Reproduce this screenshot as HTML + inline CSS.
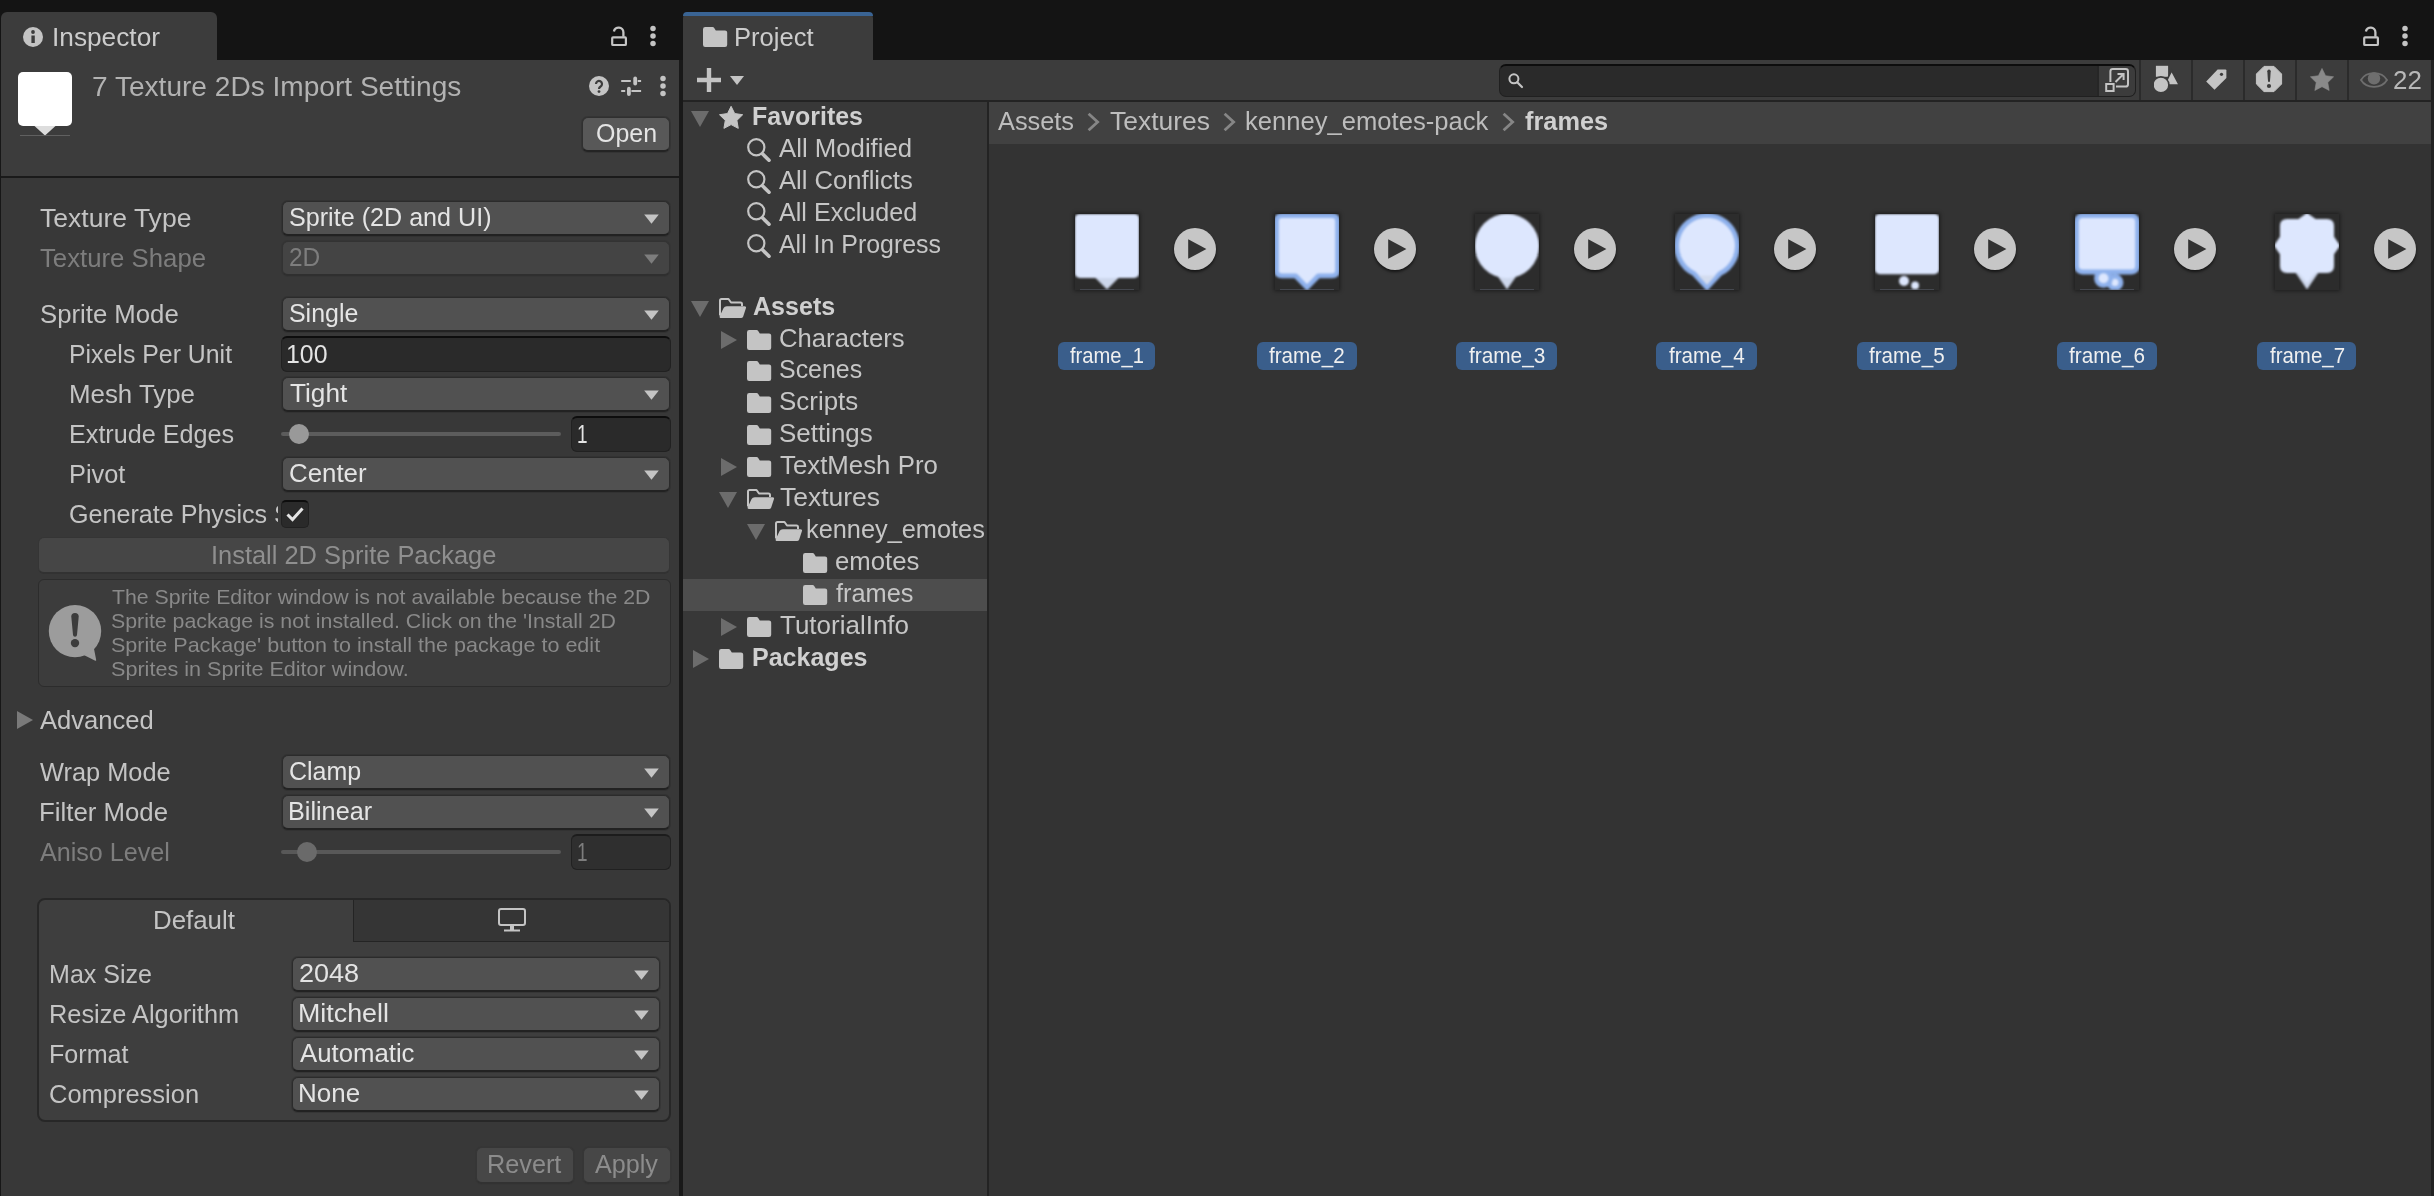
<!DOCTYPE html>
<html lang="en"><head><meta charset="utf-8"><title>Unity - Inspector / Project</title>
<style>
html,body{margin:0;padding:0;background:#141414}
body{width:2434px;height:1196px;position:relative;overflow:hidden;font-family:"Liberation Sans", sans-serif}
body div,body svg,body span{position:absolute;box-sizing:border-box}
.t{white-space:pre;line-height:30px;transform-origin:0 50%}
</style></head>
<body>
<div style="left:0px;top:0px;width:2434px;height:1196px;background:#141414;"></div>
<div style="left:1px;top:12px;width:216px;height:50px;background:#3c3c3c;border-radius:6px 6px 0 0;"></div>
<div style="left:0px;top:60px;width:679px;height:118px;background:#3c3c3c;"></div>
<div style="left:0px;top:176px;width:679px;height:2px;background:#1a1a1a;"></div>
<div style="left:0px;top:178px;width:679px;height:1018px;background:#383838;"></div>
<div style="left:0px;top:60px;width:1px;height:1136px;background:#171717;"></div>
<div style="left:679px;top:60px;width:4px;height:1136px;background:#191919;"></div>
<div style="left:683px;top:12px;width:190px;height:50px;background:#3c3c3c;border-radius:6px 6px 0 0;"></div>
<div style="left:683px;top:12px;width:190px;height:4px;background:#3a6494;border-radius:6px 6px 0 0;"></div>
<div style="left:683px;top:60px;width:1751px;height:41px;background:#3c3c3c;"></div>
<div style="left:683px;top:100px;width:1751px;height:2px;background:#232323;"></div>
<div style="left:683px;top:102px;width:304px;height:1094px;background:#383838;"></div>
<div style="left:987px;top:102px;width:2px;height:1094px;background:#232323;"></div>
<div style="left:989px;top:102px;width:1445px;height:42px;background:#414141;"></div>
<div style="left:989px;top:144px;width:1445px;height:1052px;background:#333333;"></div>
<div style="left:2431px;top:60px;width:3px;height:1136px;background:#222222;"></div>
<svg style="left:23px;top:27px;" width="20" height="20" viewBox="0 0 20 20"><circle cx="10" cy="10" r="10" fill="#c4c4c4"/><circle cx="10" cy="5" r="1.9" fill="#3c3c3c"/><rect x="8.4" y="8.5" width="3.4" height="7.5" fill="#3c3c3c"/></svg>
<span class="t" style="left:52.15px;top:22px;font-size:25.3px;color:#cccccc;transform:scaleX(1.0376);">Inspector</span>
<svg style="left:610px;top:26px;" width="18" height="21" viewBox="0 0 18 21"><path d="M3.9 5.4 A4.8 4.8 0 0 1 13.4 6.2 V10.8" fill="none" stroke="#c4c4c4" stroke-width="2.3"/><rect x="2.2" y="11.4" width="13.7" height="7.6" rx="0.8" fill="none" stroke="#c4c4c4" stroke-width="2.2"/></svg>
<svg style="left:649px;top:25px;" width="8" height="22" viewBox="0 0 8 22"><circle cx="4" cy="3.5" r="2.75" fill="#c4c4c4"/><circle cx="4" cy="11.0" r="2.75" fill="#c4c4c4"/><circle cx="4" cy="18.5" r="2.75" fill="#c4c4c4"/></svg>
<svg style="left:18px;top:72px;" width="54" height="64" viewBox="0 0 54 64"><rect x="0" y="0" width="54" height="54" rx="5" fill="#ffffff"/><path d="M16.5 54 H37.5 L27 63.5 Z" fill="#dddddd"/><rect x="2" y="63" width="50" height="0.8" fill="#6a6a6a"/></svg>
<span class="t" style="left:92.18px;top:72px;font-size:27.3px;color:#b2b2b2;transform:scaleX(1.0286);">7 Texture 2Ds Import Settings</span>
<svg style="left:589px;top:76px;" width="20" height="20" viewBox="0 0 20 20"><circle cx="10" cy="10" r="10" fill="#c4c4c4"/><path d="M7 8 a3 3 0 1 1 4.6 2.5 c-1.1 0.7 -1.6 1.2 -1.6 2.4" fill="none" stroke="#3c3c3c" stroke-width="2.2"/><circle cx="10" cy="15.6" r="1.4" fill="#3c3c3c"/></svg>
<svg style="left:620px;top:76px;" width="22" height="21" viewBox="0 0 22 21"><g stroke="#c4c4c4" stroke-width="2" fill="none"><path d="M1.2 5 H10.8"/><path d="M17.7 5 H21.1"/><path d="M1.2 15 H5.2"/><path d="M11.4 15 H21.1"/></g><rect x="13.3" y="0.5" width="3.8" height="9" rx="1.9" fill="#c4c4c4"/><rect x="7" y="10.8" width="3.8" height="9.2" rx="1.9" fill="#c4c4c4"/></svg>
<svg style="left:659px;top:75px;" width="8" height="22" viewBox="0 0 8 22"><circle cx="4" cy="3.5" r="2.75" fill="#c4c4c4"/><circle cx="4" cy="11.0" r="2.75" fill="#c4c4c4"/><circle cx="4" cy="18.5" r="2.75" fill="#c4c4c4"/></svg>
<div style="left:582px;top:117px;width:88px;height:35px;background:#585858;border:1px solid #303030;border-bottom:2px solid #242424;border-radius:6px;box-shadow:0 0 0 1px rgba(36,36,36,0.3);"></div>
<span class="t" style="left:595.53px;top:118px;font-size:25.3px;color:#e4e4e4;transform:scaleX(0.9868);">Open</span>
<span class="t" style="left:39.59px;top:203px;font-size:25.3px;color:#c4c4c4;transform:scaleX(1.0486);">Texture Type</span>
<div style="left:282px;top:201px;width:388px;height:35px;background:#515151;border:1px solid #2b2b2b;border-bottom:2px solid #222222;border-radius:6px;box-shadow:0 0 0 1px rgba(36,36,36,0.3);"></div>
<span class="t" style="left:289.21px;top:202px;font-size:25.3px;color:#e4e4e4;transform:scaleX(0.9936);">Sprite (2D and UI)</span>
<svg style="left:643.5px;top:214px;" width="15" height="10" viewBox="0 0 15 10"><path d="M0.2 0.4 L14.8 0.4 L7.5 9.7 Z" fill="#c4c4c4"/></svg>
<span class="t" style="left:39.6px;top:243px;font-size:25.3px;color:#7d7d7d;transform:scaleX(1.0177);">Texture Shape</span>
<div style="left:282px;top:241px;width:388px;height:35px;background:#444444;border:1px solid #333333;border-bottom:2px solid #2f2f2f;border-radius:6px;box-shadow:0 0 0 1px rgba(36,36,36,0.12);"></div>
<span class="t" style="left:288.85px;top:242px;font-size:25.3px;color:#7d7d7d;transform:scaleX(0.9677);">2D</span>
<svg style="left:643.5px;top:254px;" width="15" height="10" viewBox="0 0 15 10"><path d="M0.2 0.4 L14.8 0.4 L7.5 9.7 Z" fill="#7d7d7d"/></svg>
<span class="t" style="left:39.6px;top:299px;font-size:25.3px;color:#c4c4c4;transform:scaleX(1.0172);">Sprite Mode</span>
<div style="left:282px;top:297px;width:388px;height:35px;background:#515151;border:1px solid #2b2b2b;border-bottom:2px solid #222222;border-radius:6px;box-shadow:0 0 0 1px rgba(36,36,36,0.3);"></div>
<span class="t" style="left:289.22px;top:298px;font-size:25.3px;color:#e4e4e4;transform:scaleX(0.9852);">Single</span>
<svg style="left:643.5px;top:310px;" width="15" height="10" viewBox="0 0 15 10"><path d="M0.2 0.4 L14.8 0.4 L7.5 9.7 Z" fill="#c4c4c4"/></svg>
<span class="t" style="left:68.96px;top:339px;font-size:25.3px;color:#c4c4c4;transform:scaleX(0.9828);">Pixels Per Unit</span>
<div style="left:281px;top:336px;width:390px;height:36px;background:#2a2a2a;border:1px solid #212121;border-top:2px solid #0d0d0d;border-radius:6px;"></div>
<span class="t" style="left:286.15px;top:339px;font-size:25.3px;color:#e4e4e4;transform:scaleX(0.9825);">100</span>
<span class="t" style="left:68.88px;top:379px;font-size:25.3px;color:#c4c4c4;transform:scaleX(1.0220);">Mesh Type</span>
<div style="left:282px;top:377px;width:388px;height:35px;background:#515151;border:1px solid #2b2b2b;border-bottom:2px solid #222222;border-radius:6px;box-shadow:0 0 0 1px rgba(36,36,36,0.3);"></div>
<span class="t" style="left:289.59px;top:378px;font-size:25.3px;color:#e4e4e4;transform:scaleX(1.0364);">Tight</span>
<svg style="left:643.5px;top:390px;" width="15" height="10" viewBox="0 0 15 10"><path d="M0.2 0.4 L14.8 0.4 L7.5 9.7 Z" fill="#c4c4c4"/></svg>
<span class="t" style="left:68.93px;top:419px;font-size:25.3px;color:#c4c4c4;transform:scaleX(0.9952);">Extrude Edges</span>
<div style="left:281px;top:432px;width:280px;height:4px;background:#5c5c5c;border-radius:2px;"></div>
<div style="left:289px;top:424px;width:20px;height:20px;background:#999999;border-radius:50%;"></div>
<div style="left:571px;top:416px;width:100px;height:36px;background:#2a2a2a;border:1px solid #212121;border-top:2px solid #0d0d0d;border-radius:6px;"></div>
<span class="t" style="left:576.51px;top:419px;font-size:25.3px;color:#e4e4e4;transform:scaleX(0.7502);">1</span>
<span class="t" style="left:68.92px;top:459px;font-size:25.3px;color:#c4c4c4;transform:scaleX(1.0027);">Pivot</span>
<div style="left:282px;top:457px;width:388px;height:35px;background:#515151;border:1px solid #2b2b2b;border-bottom:2px solid #222222;border-radius:6px;box-shadow:0 0 0 1px rgba(36,36,36,0.3);"></div>
<span class="t" style="left:288.79px;top:458px;font-size:25.3px;color:#e4e4e4;transform:scaleX(1.0211);">Center</span>
<svg style="left:643.5px;top:470px;" width="15" height="10" viewBox="0 0 15 10"><path d="M0.2 0.4 L14.8 0.4 L7.5 9.7 Z" fill="#c4c4c4"/></svg>
<div style="left:69.32px;top:499px;width:208.3px;height:30px;overflow:hidden"><span class="t" style="left:0;top:0;font-size:25.3px;color:#c4c4c4;transform:scaleX(0.9924);">Generate Physics Shape</span></div>
<div style="left:281px;top:500px;width:28px;height:28px;background:#2a2a2a;border:1px solid #212121;border-top:2px solid #0d0d0d;border-radius:5px;"></div>
<svg style="left:285px;top:505px;" width="20" height="18" viewBox="0 0 20 18"><path d="M2.5 9.5 L7.5 14.5 L17.5 3.5" fill="none" stroke="#e4e4e4" stroke-width="3"/></svg>
<div style="left:38px;top:537px;width:632px;height:37px;background:#464646;border:1px solid #353535;border-bottom:2px solid #323232;border-radius:6px;"></div>
<span class="t" style="left:211.01px;top:540px;font-size:25.3px;color:#8f8f8f;transform:scaleX(1.0044);">Install 2D Sprite Package</span>
<div style="left:38px;top:579px;width:633px;height:108px;background:#3c3c3c;border:1px solid #2c2c2c;border-radius:6px;"></div>
<svg style="left:48px;top:604px;" width="56" height="60" viewBox="0 0 56 60"><circle cx="27" cy="27.1" r="26.2" fill="#9c9c9c"/><path d="M36.3 51.2 L46.8 56.6 Q48.6 57.5 48.1 55.4 L45.8 43.7 Z" fill="#9c9c9c"/><path d="M23.3 12.5 Q23.3 9 27 9 Q30.7 9 30.7 12.5 L29 31 Q28.8 32.8 27 32.8 Q25.2 32.8 25 31 Z" fill="#3c3c3c"/><circle cx="27" cy="39.1" r="4.2" fill="#3c3c3c"/></svg>
<span class="t" style="left:111.57px;top:582px;font-size:21px;color:#898989;transform:scaleX(1.0138);">The Sprite Editor window is not available because the 2D</span>
<span class="t" style="left:111.23px;top:606px;font-size:21px;color:#898989;transform:scaleX(1.0143);">Sprite package is not installed. Click on the &#x27;Install 2D</span>
<span class="t" style="left:111.23px;top:630px;font-size:21px;color:#898989;transform:scaleX(1.0258);">Sprite Package&#x27; button to install the package to edit</span>
<span class="t" style="left:111.23px;top:654px;font-size:21px;color:#898989;transform:scaleX(1.0282);">Sprites in Sprite Editor window.</span>
<svg style="left:17px;top:711px;" width="16" height="18" viewBox="0 0 16 18"><path d="M0 0 L16 9 L0 18 Z" fill="#7a7a7a"/></svg>
<span class="t" style="left:40px;top:705px;font-size:25.3px;color:#c4c4c4;transform:scaleX(1.0116);">Advanced</span>
<span class="t" style="left:40px;top:757px;font-size:25.3px;color:#c4c4c4;transform:scaleX(1.0033);">Wrap Mode</span>
<div style="left:282px;top:755px;width:388px;height:35px;background:#515151;border:1px solid #2b2b2b;border-bottom:2px solid #222222;border-radius:6px;box-shadow:0 0 0 1px rgba(36,36,36,0.3);"></div>
<span class="t" style="left:288.83px;top:756px;font-size:25.3px;color:#e4e4e4;transform:scaleX(0.9874);">Clamp</span>
<svg style="left:643.5px;top:768px;" width="15" height="10" viewBox="0 0 15 10"><path d="M0.2 0.4 L14.8 0.4 L7.5 9.7 Z" fill="#c4c4c4"/></svg>
<span class="t" style="left:38.78px;top:797px;font-size:25.3px;color:#c4c4c4;transform:scaleX(1.0200);">Filter Mode</span>
<div style="left:282px;top:795px;width:388px;height:35px;background:#515151;border:1px solid #2b2b2b;border-bottom:2px solid #222222;border-radius:6px;box-shadow:0 0 0 1px rgba(36,36,36,0.3);"></div>
<span class="t" style="left:288.03px;top:796px;font-size:25.3px;color:#e4e4e4;transform:scaleX(0.9967);">Bilinear</span>
<svg style="left:643.5px;top:808px;" width="15" height="10" viewBox="0 0 15 10"><path d="M0.2 0.4 L14.8 0.4 L7.5 9.7 Z" fill="#c4c4c4"/></svg>
<span class="t" style="left:40px;top:837px;font-size:25.3px;color:#7d7d7d;transform:scaleX(0.9928);">Aniso Level</span>
<div style="left:281px;top:850px;width:280px;height:4px;background:#585858;border-radius:2px;"></div>
<div style="left:297px;top:842px;width:20px;height:20px;background:#6a6a6a;border-radius:50%;"></div>
<div style="left:571px;top:834px;width:100px;height:36px;background:#2f2f2f;border:1px solid #212121;border-top:2px solid #1c1c1c;border-radius:6px;"></div>
<span class="t" style="left:576.51px;top:837px;font-size:25.3px;color:#7d7d7d;transform:scaleX(0.7502);">1</span>
<div style="left:37px;top:898px;width:634px;height:224px;background:#3e3e3e;border:2px solid #272727;border-radius:8px;"></div>
<div style="left:353px;top:900px;width:316px;height:42px;background:#353535;border-left:1px solid #242424;border-bottom:1px solid #242424;border-radius:0 6px 0 0;"></div>
<span class="t" style="left:153.28px;top:905px;font-size:25.3px;color:#c4c4c4;transform:scaleX(1.0221);">Default</span>
<svg style="left:498px;top:908px;" width="28" height="24" viewBox="0 0 28 24"><rect x="1" y="1" width="26" height="16" rx="2" fill="none" stroke="#c4c4c4" stroke-width="2"/><rect x="12" y="17" width="4" height="5" fill="#c4c4c4"/><rect x="6" y="21.5" width="16" height="2" fill="#c4c4c4"/></svg>
<span class="t" style="left:48.94px;top:959px;font-size:25.3px;color:#c4c4c4;transform:scaleX(0.9907);">Max Size</span>
<div style="left:292px;top:957px;width:368px;height:35px;background:#515151;border:1px solid #2b2b2b;border-bottom:2px solid #222222;border-radius:6px;box-shadow:0 0 0 1px rgba(36,36,36,0.3);"></div>
<span class="t" style="left:298.73px;top:958px;font-size:25.3px;color:#e4e4e4;transform:scaleX(1.0690);">2048</span>
<svg style="left:633.5px;top:970px;" width="15" height="10" viewBox="0 0 15 10"><path d="M0.2 0.4 L14.8 0.4 L7.5 9.7 Z" fill="#c4c4c4"/></svg>
<span class="t" style="left:48.92px;top:999px;font-size:25.3px;color:#c4c4c4;transform:scaleX(1.0015);">Resize Algorithm</span>
<div style="left:292px;top:997px;width:368px;height:35px;background:#515151;border:1px solid #2b2b2b;border-bottom:2px solid #222222;border-radius:6px;box-shadow:0 0 0 1px rgba(36,36,36,0.3);"></div>
<span class="t" style="left:297.91px;top:998px;font-size:25.3px;color:#e4e4e4;transform:scaleX(1.0595);">Mitchell</span>
<svg style="left:633.5px;top:1010px;" width="15" height="10" viewBox="0 0 15 10"><path d="M0.2 0.4 L14.8 0.4 L7.5 9.7 Z" fill="#c4c4c4"/></svg>
<span class="t" style="left:48.94px;top:1039px;font-size:25.3px;color:#c4c4c4;transform:scaleX(0.9932);">Format</span>
<div style="left:292px;top:1037px;width:368px;height:35px;background:#515151;border:1px solid #2b2b2b;border-bottom:2px solid #222222;border-radius:6px;box-shadow:0 0 0 1px rgba(36,36,36,0.3);"></div>
<span class="t" style="left:300px;top:1038px;font-size:25.3px;color:#e4e4e4;transform:scaleX(1.0179);">Automatic</span>
<svg style="left:633.5px;top:1050px;" width="15" height="10" viewBox="0 0 15 10"><path d="M0.2 0.4 L14.8 0.4 L7.5 9.7 Z" fill="#c4c4c4"/></svg>
<span class="t" style="left:49.21px;top:1079px;font-size:25.3px;color:#c4c4c4;transform:scaleX(1.0072);">Compression</span>
<div style="left:292px;top:1077px;width:368px;height:35px;background:#515151;border:1px solid #2b2b2b;border-bottom:2px solid #222222;border-radius:6px;box-shadow:0 0 0 1px rgba(36,36,36,0.3);"></div>
<span class="t" style="left:297.97px;top:1078px;font-size:25.3px;color:#e4e4e4;transform:scaleX(1.0264);">None</span>
<svg style="left:633.5px;top:1090px;" width="15" height="10" viewBox="0 0 15 10"><path d="M0.2 0.4 L14.8 0.4 L7.5 9.7 Z" fill="#c4c4c4"/></svg>
<div style="left:476px;top:1147px;width:98px;height:37px;background:#474747;border:1px solid #363636;border-bottom:2px solid #323232;border-radius:6px;box-shadow:0 0 0 1px rgba(36,36,36,0.1);"></div>
<span class="t" style="left:486.83px;top:1149px;font-size:25.3px;color:#8c8c8c;transform:scaleX(0.9983);">Revert</span>
<div style="left:583px;top:1147px;width:88px;height:37px;background:#474747;border:1px solid #363636;border-bottom:2px solid #323232;border-radius:6px;box-shadow:0 0 0 1px rgba(36,36,36,0.1);"></div>
<span class="t" style="left:594.5px;top:1149px;font-size:25.3px;color:#8c8c8c;transform:scaleX(0.9939);">Apply</span>
<svg style="left:703px;top:27px;" width="25" height="21" viewBox="0 0 25 21"><path d="M2.2 0 H9.6 Q10.6 0 11.2 0.9 L12.8 3.4 H22 Q24.2 3.4 24.2 5.6 V17.8 Q24.2 20 22 20 H2.2 Q0 20 0 17.8 V2.2 Q0 0 2.2 0 Z" fill="#c4c4c4"/></svg>
<span class="t" style="left:734.4px;top:22px;font-size:25.3px;color:#cccccc;transform:scaleX(1.0097);">Project</span>
<svg style="left:2362px;top:26px;" width="18" height="21" viewBox="0 0 18 21"><path d="M3.9 5.4 A4.8 4.8 0 0 1 13.4 6.2 V10.8" fill="none" stroke="#c4c4c4" stroke-width="2.3"/><rect x="2.2" y="11.4" width="13.7" height="7.6" rx="0.8" fill="none" stroke="#c4c4c4" stroke-width="2.2"/></svg>
<svg style="left:2401px;top:25px;" width="8" height="22" viewBox="0 0 8 22"><circle cx="4" cy="3.5" r="2.75" fill="#c4c4c4"/><circle cx="4" cy="11.0" r="2.75" fill="#c4c4c4"/><circle cx="4" cy="18.5" r="2.75" fill="#c4c4c4"/></svg>
<svg style="left:697px;top:68px;" width="24" height="24" viewBox="0 0 24 24"><path d="M12 0 V24 M0 12 H24" stroke="#c4c4c4" stroke-width="4.4" fill="none"/></svg>
<svg style="left:730px;top:76px;" width="14" height="9" viewBox="0 0 14 9"><path d="M0 0 H14 L7 9 Z" fill="#c4c4c4"/></svg>
<div style="left:1499px;top:64px;width:637px;height:33px;background:#2a2a2a;border:1px solid #202020;border-top:2px solid #0d0d0d;border-radius:7px;"></div>
<svg style="left:1507px;top:72px;" width="18" height="18" viewBox="0 0 18 18"><circle cx="6.9" cy="6.8" r="4.5" fill="none" stroke="#c4c4c4" stroke-width="2"/><path d="M10.2 10.2 L15 15" stroke="#c4c4c4" stroke-width="2.2" stroke-linecap="round"/></svg>
<div style="left:2097px;top:66px;width:38px;height:30px;background:#3c3c3c;border-left:2px solid #262626;border-radius:0 6px 6px 0;"></div>
<svg style="left:2105px;top:68px;" width="24" height="24" viewBox="0 0 24 24"><rect x="5.4" y="1" width="17.6" height="17.6" rx="2.4" fill="none" stroke="#c4c4c4" stroke-width="2"/><rect x="0" y="14" width="11" height="10" fill="#3c3c3c"/><rect x="1.2" y="16" width="7.4" height="7" fill="none" stroke="#c4c4c4" stroke-width="2"/><path d="M10.5 14 L18 6.5 M12.5 6 H18.6 V12" fill="none" stroke="#c4c4c4" stroke-width="2"/></svg>
<div style="left:2139px;top:60px;width:2px;height:40px;background:#2b2b2b;"></div>
<div style="left:2191px;top:60px;width:2px;height:40px;background:#2b2b2b;"></div>
<div style="left:2243px;top:60px;width:2px;height:40px;background:#2b2b2b;"></div>
<div style="left:2295px;top:60px;width:2px;height:40px;background:#2b2b2b;"></div>
<div style="left:2347px;top:60px;width:2px;height:40px;background:#2b2b2b;"></div>
<svg style="left:2154px;top:65px;" width="26" height="28" viewBox="0 0 26 28"><rect x="1.9" y="0.8" width="12.2" height="11" fill="#c4c4c4"/><path d="M17.6 5.6 L25.2 20 H10.5 Z" fill="#c4c4c4" stroke="#3c3c3c" stroke-width="1.6"/><circle cx="6.9" cy="19.9" r="8" fill="#c4c4c4" stroke="#3c3c3c" stroke-width="1.6"/></svg>
<svg style="left:2205px;top:68px;" width="24" height="24" viewBox="0 0 24 24"><path d="M12.6 1.4 H20.4 Q21.4 1.4 21.4 2.4 V10 L9.5 21.8 L1.2 13.4 Z" fill="#c4c4c4"/><circle cx="16.5" cy="6.3" r="1.6" fill="#3c3c3c"/></svg>
<svg style="left:2255px;top:65px;" width="28" height="28" viewBox="0 0 28 28"><path d="M9 1.4 H19 L26.6 9 V19 L19 26.6 H9 L1.4 19 V9 Z" fill="#c4c4c4" stroke="#c4c4c4" stroke-width="1" stroke-linejoin="round"/><path d="M12.3 6.2 Q12.3 4.6 14 4.6 Q15.7 4.6 15.7 6.2 L15 16.2 Q14.9 17 14 17 Q13.1 17 13 16.2 Z" fill="#3c3c3c"/><circle cx="14" cy="21" r="2.1" fill="#3c3c3c"/></svg>
<svg style="left:2309px;top:66px;" width="26" height="26" viewBox="0 0 26 26"><path d="M13.00,2.40 L16.59,9.66 L24.60,10.83 L18.80,16.49 L20.17,24.47 L13.00,20.70 L5.83,24.47 L7.20,16.49 L1.40,10.83 L9.41,9.66 Z" fill="#8a8a8a" stroke="#8a8a8a" stroke-width="0.6" stroke-linejoin="round"/></svg>
<svg style="left:2359px;top:70px;" width="30" height="20" viewBox="0 0 30 20"><path d="M2 10 C7.5 0.9 22.5 0.9 28 10 C22.5 19.1 7.5 19.1 2 10 Z" fill="none" stroke="#6e6e6e" stroke-width="1.8"/><circle cx="15" cy="8.4" r="6.2" fill="#6e6e6e"/></svg>
<span class="t" style="left:2392.69px;top:65px;font-size:25.3px;color:#b8b8b8;transform:scaleX(1.0220);">22</span>
<div style="left:683px;top:579px;width:304px;height:32px;background:#4d4d4d;"></div>
<svg style="left:691px;top:111px;" width="18" height="16" viewBox="0 0 18 16"><path d="M0 0 H18 L9 16 Z" fill="#6c6c6c"/></svg>
<svg style="left:719px;top:106px;" width="25" height="24" viewBox="0 0 25 24"><path d="M12.10,0.30 L15.69,7.56 L23.70,8.73 L17.90,14.39 L19.27,22.37 L12.10,18.60 L4.93,22.37 L6.30,14.39 L0.50,8.73 L8.51,7.56 Z" fill="#c4c4c4" stroke="#c4c4c4" stroke-width="1" stroke-linejoin="round"/></svg>
<span class="t" style="left:752.44px;top:101px;font-size:25.3px;color:#d0d0d0;font-weight:bold;transform:scaleX(0.9865);">Favorites</span>
<svg style="left:747px;top:137.8px;" width="26" height="26" viewBox="0 0 26 26"><circle cx="9.3" cy="9.3" r="8.1" fill="none" stroke="#c4c4c4" stroke-width="2.2"/><path d="M15.4 15.8 L22 22.2" stroke="#c4c4c4" stroke-width="3.6" stroke-linecap="round"/></svg>
<span class="t" style="left:779.3px;top:133px;font-size:25.3px;color:#c6c6c6;transform:scaleX(1.0181);">All Modified</span>
<svg style="left:747px;top:169.8px;" width="26" height="26" viewBox="0 0 26 26"><circle cx="9.3" cy="9.3" r="8.1" fill="none" stroke="#c4c4c4" stroke-width="2.2"/><path d="M15.4 15.8 L22 22.2" stroke="#c4c4c4" stroke-width="3.6" stroke-linecap="round"/></svg>
<span class="t" style="left:779.3px;top:165px;font-size:25.3px;color:#c6c6c6;transform:scaleX(1.0124);">All Conflicts</span>
<svg style="left:747px;top:201.8px;" width="26" height="26" viewBox="0 0 26 26"><circle cx="9.3" cy="9.3" r="8.1" fill="none" stroke="#c4c4c4" stroke-width="2.2"/><path d="M15.4 15.8 L22 22.2" stroke="#c4c4c4" stroke-width="3.6" stroke-linecap="round"/></svg>
<span class="t" style="left:779.3px;top:197px;font-size:25.3px;color:#c6c6c6;transform:scaleX(0.9927);">All Excluded</span>
<svg style="left:747px;top:233.8px;" width="26" height="26" viewBox="0 0 26 26"><circle cx="9.3" cy="9.3" r="8.1" fill="none" stroke="#c4c4c4" stroke-width="2.2"/><path d="M15.4 15.8 L22 22.2" stroke="#c4c4c4" stroke-width="3.6" stroke-linecap="round"/></svg>
<span class="t" style="left:779.3px;top:229px;font-size:25.3px;color:#c6c6c6;transform:scaleX(0.9846);">All In Progress</span>
<svg style="left:691px;top:301px;" width="18" height="16" viewBox="0 0 18 16"><path d="M0 0 H18 L9 16 Z" fill="#6c6c6c"/></svg>
<svg style="left:719px;top:298px;" width="28" height="21" viewBox="0 0 28 21"><path d="M1 17.5 V2.5 Q1 1 2.5 1 H9.5 L12 4.5 H21.5 Q23 4.5 23 6 V8" fill="none" stroke="#c4c4c4" stroke-width="2" stroke-linejoin="round"/><path d="M7.8 8.3 H25.5 Q27.6 8.3 26.9 10.2 L24.2 18.4 Q23.6 20 22 20 H2.2 Q0 20 0.8 18 L4.6 9.9 Q5.4 8.3 7.8 8.3 Z" fill="#c4c4c4"/></svg>
<span class="t" style="left:752.91px;top:291px;font-size:25.3px;color:#d0d0d0;font-weight:bold;transform:scaleX(0.9907);">Assets</span>
<svg style="left:721px;top:331px;" width="16" height="18" viewBox="0 0 16 18"><path d="M0 0 L16 9 L0 18 Z" fill="#6c6c6c"/></svg>
<svg style="left:747px;top:330px;" width="25" height="21" viewBox="0 0 25 21"><path d="M2.2 0 H9.6 Q10.6 0 11.2 0.9 L12.8 3.4 H22 Q24.2 3.4 24.2 5.6 V17.8 Q24.2 20 22 20 H2.2 Q0 20 0 17.8 V2.2 Q0 0 2.2 0 Z" fill="#c4c4c4"/></svg>
<span class="t" style="left:778.8px;top:323px;font-size:25.3px;color:#c6c6c6;transform:scaleX(1.0151);">Characters</span>
<svg style="left:747px;top:361px;" width="25" height="21" viewBox="0 0 25 21"><path d="M2.2 0 H9.6 Q10.6 0 11.2 0.9 L12.8 3.4 H22 Q24.2 3.4 24.2 5.6 V17.8 Q24.2 20 22 20 H2.2 Q0 20 0 17.8 V2.2 Q0 0 2.2 0 Z" fill="#c4c4c4"/></svg>
<span class="t" style="left:779.22px;top:354px;font-size:25.3px;color:#c6c6c6;transform:scaleX(0.9854);">Scenes</span>
<svg style="left:747px;top:393px;" width="25" height="21" viewBox="0 0 25 21"><path d="M2.2 0 H9.6 Q10.6 0 11.2 0.9 L12.8 3.4 H22 Q24.2 3.4 24.2 5.6 V17.8 Q24.2 20 22 20 H2.2 Q0 20 0 17.8 V2.2 Q0 0 2.2 0 Z" fill="#c4c4c4"/></svg>
<span class="t" style="left:779.19px;top:386px;font-size:25.3px;color:#c6c6c6;transform:scaleX(1.0246);">Scripts</span>
<svg style="left:747px;top:425px;" width="25" height="21" viewBox="0 0 25 21"><path d="M2.2 0 H9.6 Q10.6 0 11.2 0.9 L12.8 3.4 H22 Q24.2 3.4 24.2 5.6 V17.8 Q24.2 20 22 20 H2.2 Q0 20 0 17.8 V2.2 Q0 0 2.2 0 Z" fill="#c4c4c4"/></svg>
<span class="t" style="left:779.19px;top:418px;font-size:25.3px;color:#c6c6c6;transform:scaleX(1.0252);">Settings</span>
<svg style="left:721px;top:458px;" width="16" height="18" viewBox="0 0 16 18"><path d="M0 0 L16 9 L0 18 Z" fill="#6c6c6c"/></svg>
<svg style="left:747px;top:457px;" width="25" height="21" viewBox="0 0 25 21"><path d="M2.2 0 H9.6 Q10.6 0 11.2 0.9 L12.8 3.4 H22 Q24.2 3.4 24.2 5.6 V17.8 Q24.2 20 22 20 H2.2 Q0 20 0 17.8 V2.2 Q0 0 2.2 0 Z" fill="#c4c4c4"/></svg>
<span class="t" style="left:779.6px;top:450px;font-size:25.3px;color:#c6c6c6;transform:scaleX(1.0206);">TextMesh Pro</span>
<svg style="left:719px;top:492px;" width="18" height="16" viewBox="0 0 18 16"><path d="M0 0 H18 L9 16 Z" fill="#6c6c6c"/></svg>
<svg style="left:747px;top:489px;" width="28" height="21" viewBox="0 0 28 21"><path d="M1 17.5 V2.5 Q1 1 2.5 1 H9.5 L12 4.5 H21.5 Q23 4.5 23 6 V8" fill="none" stroke="#c4c4c4" stroke-width="2" stroke-linejoin="round"/><path d="M7.8 8.3 H25.5 Q27.6 8.3 26.9 10.2 L24.2 18.4 Q23.6 20 22 20 H2.2 Q0 20 0.8 18 L4.6 9.9 Q5.4 8.3 7.8 8.3 Z" fill="#c4c4c4"/></svg>
<span class="t" style="left:779.59px;top:482px;font-size:25.3px;color:#c6c6c6;transform:scaleX(1.0463);">Textures</span>
<svg style="left:747px;top:524px;" width="18" height="16" viewBox="0 0 18 16"><path d="M0 0 H18 L9 16 Z" fill="#6c6c6c"/></svg>
<svg style="left:775px;top:521px;" width="28" height="21" viewBox="0 0 28 21"><path d="M1 17.5 V2.5 Q1 1 2.5 1 H9.5 L12 4.5 H21.5 Q23 4.5 23 6 V8" fill="none" stroke="#c4c4c4" stroke-width="2" stroke-linejoin="round"/><path d="M7.8 8.3 H25.5 Q27.6 8.3 26.9 10.2 L24.2 18.4 Q23.6 20 22 20 H2.2 Q0 20 0.8 18 L4.6 9.9 Q5.4 8.3 7.8 8.3 Z" fill="#c4c4c4"/></svg>
<div style="left:806.42px;top:514px;width:177.8px;height:30px;overflow:hidden"><span class="t" style="left:0;top:0;font-size:25.3px;color:#c6c6c6;transform:scaleX(1.0015);">kenney_emotes-pack</span></div>
<svg style="left:803px;top:553px;" width="25" height="21" viewBox="0 0 25 21"><path d="M2.2 0 H9.6 Q10.6 0 11.2 0.9 L12.8 3.4 H22 Q24.2 3.4 24.2 5.6 V17.8 Q24.2 20 22 20 H2.2 Q0 20 0 17.8 V2.2 Q0 0 2.2 0 Z" fill="#c4c4c4"/></svg>
<span class="t" style="left:835.2px;top:546px;font-size:25.3px;color:#c6c6c6;transform:scaleX(1.0174);">emotes</span>
<svg style="left:803px;top:585px;" width="25" height="21" viewBox="0 0 25 21"><path d="M2.2 0 H9.6 Q10.6 0 11.2 0.9 L12.8 3.4 H22 Q24.2 3.4 24.2 5.6 V17.8 Q24.2 20 22 20 H2.2 Q0 20 0 17.8 V2.2 Q0 0 2.2 0 Z" fill="#c4c4c4"/></svg>
<span class="t" style="left:836px;top:578px;font-size:25.3px;color:#c6c6c6;transform:scaleX(1.0022);">frames</span>
<svg style="left:721px;top:618px;" width="16" height="18" viewBox="0 0 16 18"><path d="M0 0 L16 9 L0 18 Z" fill="#6c6c6c"/></svg>
<svg style="left:747px;top:617px;" width="25" height="21" viewBox="0 0 25 21"><path d="M2.2 0 H9.6 Q10.6 0 11.2 0.9 L12.8 3.4 H22 Q24.2 3.4 24.2 5.6 V17.8 Q24.2 20 22 20 H2.2 Q0 20 0 17.8 V2.2 Q0 0 2.2 0 Z" fill="#c4c4c4"/></svg>
<span class="t" style="left:779.59px;top:610px;font-size:25.3px;color:#c6c6c6;transform:scaleX(1.0274);">TutorialInfo</span>
<svg style="left:693px;top:650px;" width="16" height="18" viewBox="0 0 16 18"><path d="M0 0 L16 9 L0 18 Z" fill="#6c6c6c"/></svg>
<svg style="left:719px;top:649px;" width="25" height="21" viewBox="0 0 25 21"><path d="M2.2 0 H9.6 Q10.6 0 11.2 0.9 L12.8 3.4 H22 Q24.2 3.4 24.2 5.6 V17.8 Q24.2 20 22 20 H2.2 Q0 20 0 17.8 V2.2 Q0 0 2.2 0 Z" fill="#c4c4c4"/></svg>
<span class="t" style="left:752.44px;top:642px;font-size:25.3px;color:#d0d0d0;font-weight:bold;transform:scaleX(0.9891);">Packages</span>
<span class="t" style="left:997.8px;top:106px;font-size:25.3px;color:#bdbdbd;transform:scaleX(1.0015);">Assets</span>
<span class="t" style="left:1110.29px;top:106px;font-size:25.3px;color:#bdbdbd;transform:scaleX(1.0463);">Textures</span>
<span class="t" style="left:1245.3px;top:106px;font-size:25.3px;color:#bdbdbd;transform:scaleX(1.0117);">kenney_emotes-pack</span>
<span class="t" style="left:1525.1px;top:106px;font-size:25.3px;color:#d0d0d0;font-weight:bold;transform:scaleX(1.0015);">frames</span>
<svg style="left:1087.2px;top:112px;" width="13" height="20" viewBox="0 0 13 20"><path d="M1.6 1.8 L10.6 10 L1.6 18.2" fill="none" stroke="#868686" stroke-width="2.8"/></svg>
<svg style="left:1223.2px;top:112px;" width="13" height="20" viewBox="0 0 13 20"><path d="M1.6 1.8 L10.6 10 L1.6 18.2" fill="none" stroke="#868686" stroke-width="2.8"/></svg>
<svg style="left:1502.2px;top:112px;" width="13" height="20" viewBox="0 0 13 20"><path d="M1.6 1.8 L10.6 10 L1.6 18.2" fill="none" stroke="#868686" stroke-width="2.8"/></svg>
<div style="left:1075px;top:214px;width:64px;height:76px;background:#2c2c2c;box-shadow:0 0 4px 1px rgba(0,0,0,0.45);"></div>
<div style="left:1075px;top:214px;width:64px;height:76px;overflow:hidden"><svg style="left:-1px;top:-1px;filter:blur(0.82px)" width="66" height="77" viewBox="0 0 66 77"><path d="M21 64.5 H45 L33 76.4 Z" fill="#cdd7ec"/><rect x="0.8" y="0.9" width="64.4" height="64" rx="5" fill="#dde7fe"/></svg></div>
<div style="left:1080px;top:289px;width:54px;height:1px;background:rgba(160,175,205,0.22);"></div>
<div style="left:1173.8px;top:227.8px;width:42.4px;height:42.4px;background:#c6c6c6;border-radius:50%;box-shadow:0 2px 3px rgba(0,0,0,0.6);"></div>
<svg style="left:1188px;top:239px;" width="19" height="20" viewBox="0 0 19 20"><path d="M0.2 0.2 L18.4 10 L0.2 19.8 Z" fill="#323232"/></svg>
<div style="left:1058.0px;top:342px;width:97px;height:28px;background:#3a5e8b;border-radius:6px;"></div>
<span class="t" style="left:1070.15px;top:341px;font-size:22px;color:#f0f0f0;transform:scaleX(0.9159);">frame_1</span>
<div style="left:1275px;top:214px;width:64px;height:76px;background:#2c2c2c;box-shadow:0 0 4px 1px rgba(0,0,0,0.45);"></div>
<div style="left:1275px;top:214px;width:64px;height:76px;overflow:hidden"><svg style="left:-1px;top:-1px;filter:blur(0.82px)" width="66" height="77" viewBox="0 0 66 77"><path d="M8 2.6 H58 Q63.6 2.6 63.6 8.2 V57.2 Q63.6 62.8 58 62.8 H44.5 L33 74.6 L21.5 62.8 H8 Q2.4 62.8 2.4 57.2 V8.2 Q2.4 2.6 8 2.6 Z" fill="#dde7fe" stroke="#8eb1ec" stroke-width="4.8" stroke-linejoin="round"/></svg></div>
<div style="left:1280px;top:289px;width:54px;height:1px;background:rgba(160,175,205,0.22);"></div>
<div style="left:1373.8px;top:227.8px;width:42.4px;height:42.4px;background:#c6c6c6;border-radius:50%;box-shadow:0 2px 3px rgba(0,0,0,0.6);"></div>
<svg style="left:1388px;top:239px;" width="19" height="20" viewBox="0 0 19 20"><path d="M0.2 0.2 L18.4 10 L0.2 19.8 Z" fill="#323232"/></svg>
<div style="left:1256.5px;top:342px;width:100px;height:28px;background:#3a5e8b;border-radius:6px;"></div>
<span class="t" style="left:1269.25px;top:341px;font-size:22px;color:#f0f0f0;transform:scaleX(0.9384);">frame_2</span>
<div style="left:1475px;top:214px;width:64px;height:76px;background:#2c2c2c;box-shadow:0 0 4px 1px rgba(0,0,0,0.45);"></div>
<div style="left:1475px;top:214px;width:64px;height:76px;overflow:hidden"><svg style="left:-1px;top:-1px;filter:blur(0.82px)" width="66" height="77" viewBox="0 0 66 77"><path d="M23.5 63 H42.5 L33 76.4 Z" fill="#cdd7ec"/><circle cx="33" cy="33" r="32.2" fill="#dde7fe"/></svg></div>
<div style="left:1480px;top:289px;width:54px;height:1px;background:rgba(160,175,205,0.22);"></div>
<div style="left:1573.8px;top:227.8px;width:42.4px;height:42.4px;background:#c6c6c6;border-radius:50%;box-shadow:0 2px 3px rgba(0,0,0,0.6);"></div>
<svg style="left:1588px;top:239px;" width="19" height="20" viewBox="0 0 19 20"><path d="M0.2 0.2 L18.4 10 L0.2 19.8 Z" fill="#323232"/></svg>
<div style="left:1456.0px;top:342px;width:101px;height:28px;background:#3a5e8b;border-radius:6px;"></div>
<span class="t" style="left:1468.95px;top:341px;font-size:22px;color:#f0f0f0;transform:scaleX(0.9459);">frame_3</span>
<div style="left:1675px;top:214px;width:64px;height:76px;background:#2c2c2c;box-shadow:0 0 4px 1px rgba(0,0,0,0.45);"></div>
<div style="left:1675px;top:214px;width:64px;height:76px;overflow:hidden"><svg style="left:-1px;top:-1px;filter:blur(0.82px)" width="66" height="77" viewBox="0 0 66 77"><path d="M33 2.4 A30.6 30.6 0 0 1 46 60.6 L33 74.6 L20 60.6 A30.6 30.6 0 0 1 33 2.4 Z" fill="#dde7fe" stroke="#8eb1ec" stroke-width="4.8" stroke-linejoin="round"/><path d="M24.5 62.5 H41.5 L33 72 Z" fill="#d3dcee"/></svg></div>
<div style="left:1680px;top:289px;width:54px;height:1px;background:rgba(160,175,205,0.22);"></div>
<div style="left:1773.8px;top:227.8px;width:42.4px;height:42.4px;background:#c6c6c6;border-radius:50%;box-shadow:0 2px 3px rgba(0,0,0,0.6);"></div>
<svg style="left:1788px;top:239px;" width="19" height="20" viewBox="0 0 19 20"><path d="M0.2 0.2 L18.4 10 L0.2 19.8 Z" fill="#323232"/></svg>
<div style="left:1656.0px;top:342px;width:101px;height:28px;background:#3a5e8b;border-radius:6px;"></div>
<span class="t" style="left:1669.1px;top:341px;font-size:22px;color:#f0f0f0;transform:scaleX(0.9381);">frame_4</span>
<div style="left:1875px;top:214px;width:64px;height:76px;background:#2c2c2c;box-shadow:0 0 4px 1px rgba(0,0,0,0.45);"></div>
<div style="left:1875px;top:214px;width:64px;height:76px;overflow:hidden"><svg style="left:-1px;top:-1px;filter:blur(0.82px)" width="66" height="77" viewBox="0 0 66 77"><rect x="0.8" y="0.9" width="64.4" height="60.4" rx="5" fill="#dde7fe"/><circle cx="30" cy="68" r="5" fill="#dde7fe"/><circle cx="41.1" cy="72.4" r="3.9" fill="#dde7fe"/></svg></div>
<div style="left:1880px;top:289px;width:54px;height:1px;background:rgba(160,175,205,0.22);"></div>
<div style="left:1973.8px;top:227.8px;width:42.4px;height:42.4px;background:#c6c6c6;border-radius:50%;box-shadow:0 2px 3px rgba(0,0,0,0.6);"></div>
<svg style="left:1988px;top:239px;" width="19" height="20" viewBox="0 0 19 20"><path d="M0.2 0.2 L18.4 10 L0.2 19.8 Z" fill="#323232"/></svg>
<div style="left:1856.5px;top:342px;width:100px;height:28px;background:#3a5e8b;border-radius:6px;"></div>
<span class="t" style="left:1869.3px;top:341px;font-size:22px;color:#f0f0f0;transform:scaleX(0.9372);">frame_5</span>
<div style="left:2075px;top:214px;width:64px;height:76px;background:#2c2c2c;box-shadow:0 0 4px 1px rgba(0,0,0,0.45);"></div>
<div style="left:2075px;top:214px;width:64px;height:76px;overflow:hidden"><svg style="left:-1px;top:-1px;filter:blur(0.82px)" width="66" height="77" viewBox="0 0 66 77"><circle cx="41" cy="69.4" r="6" fill="#dde7fe" stroke="#8eb1ec" stroke-width="4.8"/><circle cx="29.5" cy="65.3" r="7" fill="#dde7fe" stroke="#8eb1ec" stroke-width="4.8"/><rect x="2.4" y="2.6" width="61.2" height="56.4" rx="6" fill="#dde7fe" stroke="#8eb1ec" stroke-width="4.8"/><circle cx="29.5" cy="65.3" r="5" fill="#dde7fe"/></svg></div>
<div style="left:2080px;top:289px;width:54px;height:1px;background:rgba(160,175,205,0.22);"></div>
<div style="left:2173.8px;top:227.8px;width:42.4px;height:42.4px;background:#c6c6c6;border-radius:50%;box-shadow:0 2px 3px rgba(0,0,0,0.6);"></div>
<svg style="left:2188px;top:239px;" width="19" height="20" viewBox="0 0 19 20"><path d="M0.2 0.2 L18.4 10 L0.2 19.8 Z" fill="#323232"/></svg>
<div style="left:2056.5px;top:342px;width:100px;height:28px;background:#3a5e8b;border-radius:6px;"></div>
<span class="t" style="left:2069.15px;top:341px;font-size:22px;color:#f0f0f0;transform:scaleX(0.9409);">frame_6</span>
<div style="left:2275px;top:214px;width:64px;height:76px;background:#2c2c2c;box-shadow:0 0 4px 1px rgba(0,0,0,0.45);"></div>
<div style="left:2275px;top:214px;width:64px;height:76px;overflow:hidden"><svg style="left:-1px;top:-1px;filter:blur(0.82px)" width="66" height="77" viewBox="0 0 66 77"><path d="M20.5 58 H45.5 L33 76.4 Z" fill="#cdd7ec"/><path d="M33 0.8 L41.5 6.8 H53 Q59.3 6.8 59.3 13 V24 L65.2 32.6 L59.3 41 V53 Q59.3 59.2 53 59.2 H13 Q6.7 59.2 6.7 53 V41 L0.8 32.6 L6.7 24 V13 Q6.7 6.8 13 6.8 H24.5 Z" fill="#dde7fe" stroke="#dde7fe" stroke-width="1.5" stroke-linejoin="round"/><path d="M24 59 H42 L33 70 Z" fill="#dde7fe"/></svg></div>
<div style="left:2373.8px;top:227.8px;width:42.4px;height:42.4px;background:#c6c6c6;border-radius:50%;box-shadow:0 2px 3px rgba(0,0,0,0.6);"></div>
<svg style="left:2388px;top:239px;" width="19" height="20" viewBox="0 0 19 20"><path d="M0.2 0.2 L18.4 10 L0.2 19.8 Z" fill="#323232"/></svg>
<div style="left:2257.0px;top:342px;width:99px;height:28px;background:#3a5e8b;border-radius:6px;"></div>
<span class="t" style="left:2269.6px;top:341px;font-size:22px;color:#f0f0f0;transform:scaleX(0.9297);">frame_7</span>
</body></html>
